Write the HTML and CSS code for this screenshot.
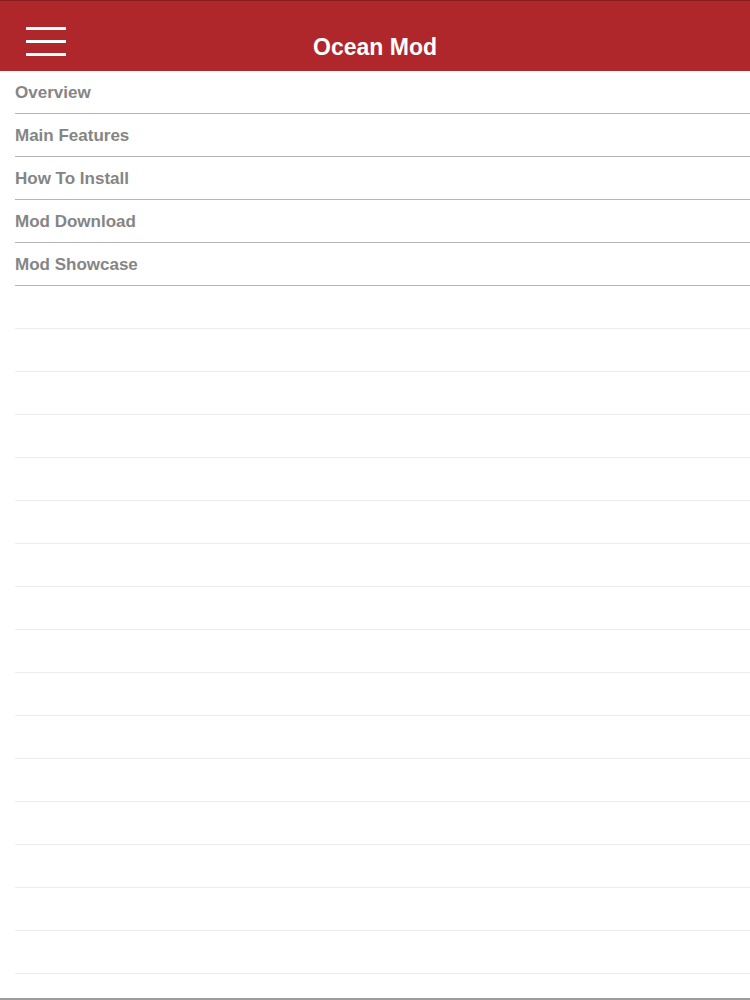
FILE: index.html
```html
<!DOCTYPE html>
<html>
<head>
<meta charset="utf-8">
<link rel="stylesheet" href="styles.css">
</head>
<body>
<div class="screen">
  <header class="topbar">
    <button class="menu" aria-label="Menu">
      <span class="bar"></span><span class="bar"></span><span class="bar"></span>
    </button>
    <h1 class="title">Ocean Mod</h1>
  </header>
  <ul class="list">
    <li class="row item">Overview</li>
    <li class="row item">Main Features</li>
    <li class="row item">How To Install</li>
    <li class="row item">Mod Download</li>
    <li class="row item">Mod Showcase</li>
    <li class="row empty"></li>
    <li class="row empty"></li>
    <li class="row empty"></li>
    <li class="row empty"></li>
    <li class="row empty"></li>
    <li class="row empty"></li>
    <li class="row empty"></li>
    <li class="row empty"></li>
    <li class="row empty"></li>
    <li class="row empty"></li>
    <li class="row empty"></li>
    <li class="row empty"></li>
    <li class="row empty"></li>
    <li class="row empty"></li>
    <li class="row empty"></li>
    <li class="row empty"></li>
    <li class="row empty"></li>
  </ul>
</div>
</body>
</html>
```
FILE: styles.css
```css
* { box-sizing: border-box; }
html, body { margin: 0; padding: 0; background: #ffffff; }
body { font-family: "Liberation Sans", Arial, Helvetica, sans-serif; }

.screen {
  width: 750px;
  height: 1000px;
  overflow: hidden;
  display: flex;
  flex-direction: column;
  border-bottom: 2px solid #9c9c9c;
}

.topbar {
  flex: none;
  height: 71px;
  background: #b0272b;
  border-top: 1px solid #8c1b1f;
  display: flex;
  align-items: flex-start;
  position: relative;
}

.menu {
  width: 40px;
  margin-left: 26px;
  margin-top: 26px;
  padding: 0;
  border: 0;
  background: transparent;
  display: flex;
  flex-direction: column;
  gap: 10px;
}
.menu .bar {
  display: block;
  height: 3px;
  width: 40px;
  background: #ffffff;
}

.title {
  position: absolute;
  left: 0;
  right: 0;
  top: 0;
  margin: 0;
  padding-top: 33px;
  text-align: center;
  line-height: 26px;
  color: #ffffff;
  font-size: 23px;
  font-weight: 600;
  pointer-events: none;
}

.list {
  list-style: none;
  margin: 0;
  padding: 0 0 0 15px;
  flex: 1;
  overflow: hidden;
}

.row {
  height: 43px;
  display: flex;
  align-items: center;
}

.item {
  border-bottom: 1.5px solid #b4b4b4;
  color: #858585;
  font-size: 17px;
  font-weight: 600;
  padding-top: 1px;
}

.empty {
  border-bottom: 1px solid #ececec;
}
```
